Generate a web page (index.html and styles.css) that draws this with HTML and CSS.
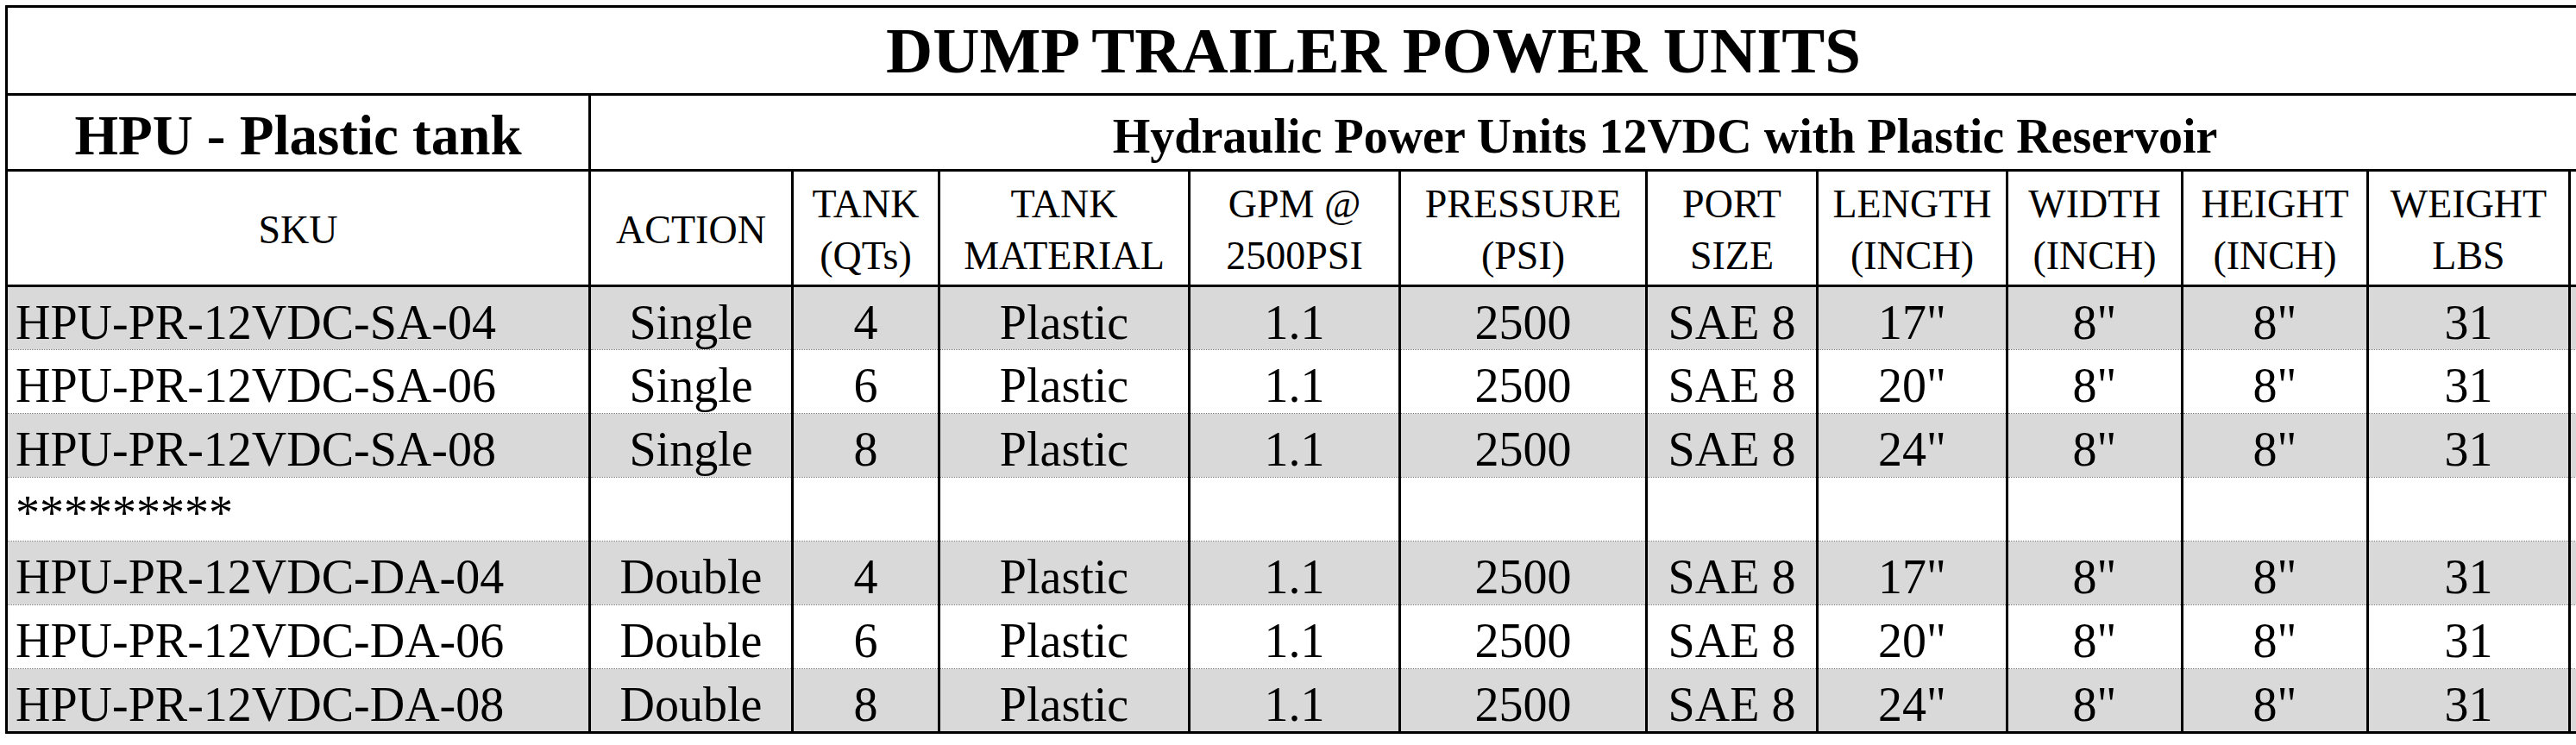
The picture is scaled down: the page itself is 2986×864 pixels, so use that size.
FILE: index.html
```html
<!DOCTYPE html>
<html lang="en">
<head>
<meta charset="utf-8">
<title>Dump Trailer Power Units</title>
<link rel="stylesheet" href="styles.css">
</head>
<body>
<div class="sheet">
<table class="units">
  <colgroup>
    <col class="c-sku">
    <col class="c-action">
    <col class="c-tank">
    <col class="c-mat">
    <col class="c-gpm">
    <col class="c-press">
    <col class="c-port">
    <col class="c-len">
    <col class="c-wid">
    <col class="c-hei">
    <col class="c-wei">
    <col class="c-extra">
  </colgroup>
  <thead>
    <tr class="r-title">
      <th colspan="12" class="title">DUMP TRAILER POWER UNITS</th>
    </tr>
    <tr class="r-sub">
      <th class="sub-left">HPU - Plastic tank</th>
      <th colspan="11" class="sub-right">Hydraulic Power Units 12VDC with Plastic Reservoir</th>
    </tr>
    <tr class="r-head">
      <th>SKU</th>
      <th>ACTION</th>
      <th>TANK<br>(QTs)</th>
      <th>TANK<br>MATERIAL</th>
      <th>GPM @<br>2500PSI</th>
      <th>PRESSURE<br>(PSI)</th>
      <th>PORT<br>SIZE</th>
      <th>LENGTH<br>(INCH)</th>
      <th>WIDTH<br>(INCH)</th>
      <th>HEIGHT<br>(INCH)</th>
      <th>WEIGHT<br>LBS</th>
      <th></th>
    </tr>
  </thead>
  <tbody>
    <tr class="r-data shade">
      <td class="sku">HPU-PR-12VDC-SA-04</td><td>Single</td><td>4</td><td>Plastic</td><td>1.1</td><td>2500</td><td>SAE 8</td><td>17"</td><td>8"</td><td>8"</td><td>31</td><td></td>
    </tr>
    <tr class="r-data">
      <td class="sku">HPU-PR-12VDC-SA-06</td><td>Single</td><td>6</td><td>Plastic</td><td>1.1</td><td>2500</td><td>SAE 8</td><td>20"</td><td>8"</td><td>8"</td><td>31</td><td></td>
    </tr>
    <tr class="r-data shade">
      <td class="sku">HPU-PR-12VDC-SA-08</td><td>Single</td><td>8</td><td>Plastic</td><td>1.1</td><td>2500</td><td>SAE 8</td><td>24"</td><td>8"</td><td>8"</td><td>31</td><td></td>
    </tr>
    <tr class="r-data">
      <td class="sku">*********</td><td></td><td></td><td></td><td></td><td></td><td></td><td></td><td></td><td></td><td></td><td></td>
    </tr>
    <tr class="r-data shade">
      <td class="sku">HPU-PR-12VDC-DA-04</td><td>Double</td><td>4</td><td>Plastic</td><td>1.1</td><td>2500</td><td>SAE 8</td><td>17"</td><td>8"</td><td>8"</td><td>31</td><td></td>
    </tr>
    <tr class="r-data">
      <td class="sku">HPU-PR-12VDC-DA-06</td><td>Double</td><td>6</td><td>Plastic</td><td>1.1</td><td>2500</td><td>SAE 8</td><td>20"</td><td>8"</td><td>8"</td><td>31</td><td></td>
    </tr>
    <tr class="r-data shade">
      <td class="sku">HPU-PR-12VDC-DA-08</td><td>Double</td><td>8</td><td>Plastic</td><td>1.1</td><td>2500</td><td>SAE 8</td><td>24"</td><td>8"</td><td>8"</td><td>31</td><td></td>
    </tr>
  </tbody>
</table>
</div>
</body>
</html>
```

FILE: styles.css
```css
html, body {
  margin: 0;
  padding: 0;
  background: #ffffff;
  overflow: hidden;
}

.sheet {
  padding: 6px 0 0 6px;
  width: max-content;
}

.units {
  border-collapse: collapse;
  table-layout: fixed;
  width: 3169px;
  font-family: "Liberation Serif", "Times New Roman", serif;
  color: #000;
  border: 3px solid #000;
}

.c-sku { width: 676px; }
.c-action { width: 235px; }
.c-tank { width: 170px; }
.c-mat { width: 290px; }
.c-gpm { width: 244px; }
.c-press { width: 286px; }
.c-port { width: 198px; }
.c-len { width: 220px; }
.c-wid { width: 203px; }
.c-hei { width: 215px; }
.c-wei { width: 234px; }
.c-extra { width: 198px; }

.units th,
.units td {
  border: 3px solid #000;
  padding: 0;
  text-align: center;
  vertical-align: middle;
  white-space: nowrap;
  overflow: hidden;
}

.r-title { height: 102px; }
.r-sub { height: 88px; }
.r-head { height: 134px; }
.r-data { height: 74px; }

.title {
  font-size: 75px;
  font-weight: bold;
  line-height: 1;
  padding-top: 12px;
}

.r-sub th {
  font-weight: bold;
  line-height: 1;
  padding-top: 8px;
}

.sub-left { font-size: 65px; }
.sub-right { font-size: 56px; }

.r-head th {
  font-size: 46px;
  font-weight: normal;
  line-height: 60px;
  padding-top: 4px;
}

.r-data td {
  font-size: 56px;
  line-height: 1;
  padding-top: 9px;
  border-top: 1px dotted #7a7a7a;
  border-bottom: 1px dotted #7a7a7a;
}

.units tbody tr:first-child td { border-top: 3px solid #000; }
.units tbody tr:last-child td { border-bottom: 3px solid #000; }

.r-data.shade td { background: #d9d9d9; }

.r-data td.sku {
  text-align: left;
  padding-left: 9px;
}
```
